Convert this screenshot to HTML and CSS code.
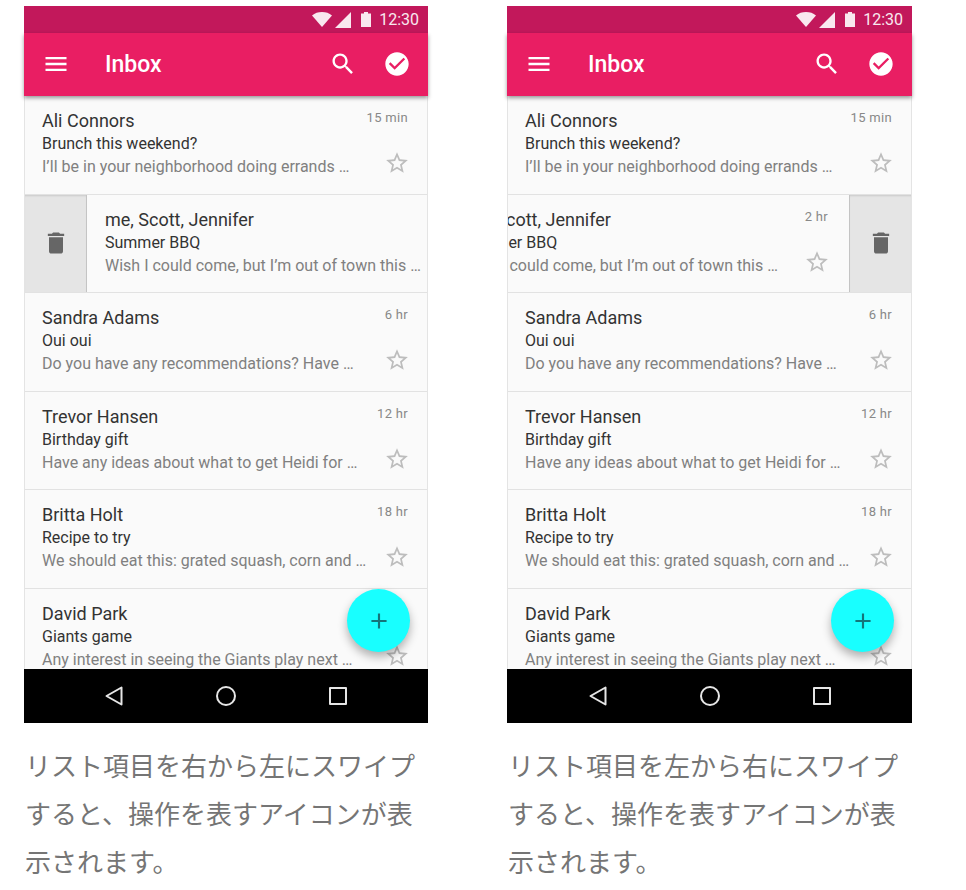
FILE: index.html
```html
<!DOCTYPE html>
<html lang="ja">
<head>
<meta charset="utf-8">
<title>Swipe</title>
<link rel="stylesheet" href="styles.css">
</head>
<body>
<main class="page">
  <figure class="figure figure-a">
    <div class="phone">
      <div class="status">
        <svg class="st-wifi" viewBox="0 0 20 15"><path d="M0 3.4C2.7 1.200 6.200 0 10 0s7.300 1.200 10 3.400L10 15z"/></svg>
        <svg class="st-signal" viewBox="0 0 16 16"><path d="M16 0v16H0z"/></svg>
        <svg class="st-batt" viewBox="0 0 10 15"><path d="M3 0h4v1.500h3V15H0V1.500h3z"/></svg>
        <span class="clock">12:30</span>
      </div>
      <header class="appbar">
        <svg class="icon menu" viewBox="0 0 24 24"><path d="M3 18h18v-2H3v2zm0-5h18v-2H3v2zm0-7v2h18V6H3z"/></svg>
        <span class="title">Inbox</span>
        <svg class="icon search" viewBox="0 0 24 24"><path d="M15.500 14h-.79l-.28-.27C15.410 12.590 16 11.110 16 9.500 16 5.910 13.090 3 9.500 3S3 5.910 3 9.500 5.910 16 9.500 16c1.610 0 3.090-.59 4.230-1.570l.27.28v.79l5 4.990L20.490 19l-4.990-5zm-6 0C7.010 14 5 11.990 5 9.500S7.010 5 9.500 5 14 7.010 14 9.500 11.990 14 9.500 14z"/></svg>
        <svg class="icon check" viewBox="0 0 24 24"><path d="M12 2C6.480 2 2 6.480 2 12s4.480 10 10 10 10-4.480 10-10S17.520 2 12 2zm-2 15l-5-5 1.410-1.410L10 14.170l7.590-7.590L19 8l-9 9z"/></svg>
      </header>
      <div class="list">
        <article class="row">
          <div class="row-main"><div class="name">Ali Connors</div><div class="subject">Brunch this weekend?</div><div class="snippet">I’ll be in your neighborhood doing errands …</div></div>
          <div class="row-side"><span class="time">15 min</span><svg class="star" viewBox="0 0 24 24"><path d="M22 9.240l-7.190-.62L12 2 9.190 8.630 2 9.240l5.460 4.730L5.820 21 12 17.270 18.180 21l-1.630-7.030L22 9.240zM12 15.400l-3.760 2.270 1-4.280-3.320-2.880 4.380-.38L12 6.100l1.710 4.040 4.380.38-3.320 2.880 1 4.280L12 15.400z"/></svg></div>
        </article>
        <article class="row swiped swiped-right">
          <div class="action action-left"><svg class="icon trash" viewBox="0 0 24 24"><path d="M6 19c0 1.100.9 2 2 2h8c1.100 0 2-.9 2-2V7H6v12zM19 4h-3.500l-1-1h-5l-1 1H5v2h14V4z"/></svg></div>
          <div class="row-main"><div class="name">me, Scott, Jennifer</div><div class="subject">Summer BBQ</div><div class="snippet">Wish I could come, but I’m out of town this …</div></div>
        </article>
        <article class="row">
          <div class="row-main"><div class="name">Sandra Adams</div><div class="subject">Oui oui</div><div class="snippet">Do you have any recommendations? Have …</div></div>
          <div class="row-side"><span class="time">6 hr</span><svg class="star" viewBox="0 0 24 24"><path d="M22 9.240l-7.190-.62L12 2 9.190 8.630 2 9.240l5.460 4.730L5.820 21 12 17.270 18.180 21l-1.630-7.030L22 9.240zM12 15.400l-3.760 2.270 1-4.280-3.320-2.880 4.380-.38L12 6.100l1.710 4.040 4.380.38-3.320 2.880 1 4.280L12 15.400z"/></svg></div>
        </article>
        <article class="row">
          <div class="row-main"><div class="name">Trevor Hansen</div><div class="subject">Birthday gift</div><div class="snippet">Have any ideas about what to get Heidi for …</div></div>
          <div class="row-side"><span class="time">12 hr</span><svg class="star" viewBox="0 0 24 24"><path d="M22 9.240l-7.190-.62L12 2 9.190 8.630 2 9.240l5.460 4.730L5.820 21 12 17.270 18.180 21l-1.630-7.030L22 9.240zM12 15.400l-3.760 2.270 1-4.280-3.320-2.880 4.380-.38L12 6.100l1.710 4.040 4.380.38-3.320 2.880 1 4.280L12 15.400z"/></svg></div>
        </article>
        <article class="row">
          <div class="row-main"><div class="name">Britta Holt</div><div class="subject">Recipe to try</div><div class="snippet">We should eat this: grated squash, corn and …</div></div>
          <div class="row-side"><span class="time">18 hr</span><svg class="star" viewBox="0 0 24 24"><path d="M22 9.240l-7.190-.62L12 2 9.190 8.630 2 9.240l5.460 4.730L5.820 21 12 17.270 18.180 21l-1.630-7.030L22 9.240zM12 15.400l-3.760 2.270 1-4.280-3.320-2.880 4.380-.38L12 6.100l1.710 4.040 4.380.38-3.320 2.880 1 4.280L12 15.400z"/></svg></div>
        </article>
        <article class="row">
          <div class="row-main"><div class="name">David Park</div><div class="subject">Giants game</div><div class="snippet">Any interest in seeing the Giants play next …</div></div>
          <div class="row-side"><span class="time"></span><svg class="star" viewBox="0 0 24 24"><path d="M22 9.240l-7.190-.62L12 2 9.190 8.630 2 9.240l5.460 4.730L5.820 21 12 17.270 18.180 21l-1.630-7.030L22 9.240zM12 15.400l-3.760 2.270 1-4.280-3.320-2.880 4.380-.38L12 6.100l1.710 4.040 4.380.38-3.320 2.880 1 4.280L12 15.400z"/></svg></div>
        </article>
        <div class="fab"><svg viewBox="0 0 24 24"><path d="M19 13h-6v6h-2v-6H5v-2h6V5h2v6h6v2z"/></svg></div>
      </div>
      <nav class="navbar">
        <svg class="nav-icon" viewBox="0 0 20 20"><path d="M17.500 1.500v17L2.500 10z"/></svg>
        <svg class="nav-icon" viewBox="0 0 20 20"><circle cx="10" cy="10" r="9"/></svg>
        <svg class="nav-icon" viewBox="0 0 20 20"><rect x="2" y="2" width="16" height="16"/></svg>
      </nav>
    </div>
    <figcaption class="caption">リスト項目を右から左にスワイプすると、操作を表すアイコンが表示されます。</figcaption>
  </figure>

  <figure class="figure figure-b">
    <div class="phone">
      <div class="status">
        <svg class="st-wifi" viewBox="0 0 20 15"><path d="M0 3.4C2.700 1.200 6.200 0 10 0s7.300 1.200 10 3.400L10 15z"/></svg>
        <svg class="st-signal" viewBox="0 0 16 16"><path d="M16 0v16H0z"/></svg>
        <svg class="st-batt" viewBox="0 0 10 15"><path d="M3 0h4v1.500h3V15H0V1.500h3z"/></svg>
        <span class="clock">12:30</span>
      </div>
      <header class="appbar">
        <svg class="icon menu" viewBox="0 0 24 24"><path d="M3 18h18v-2H3v2zm0-5h18v-2H3v2zm0-7v2h18V6H3z"/></svg>
        <span class="title">Inbox</span>
        <svg class="icon search" viewBox="0 0 24 24"><path d="M15.500 14h-.79l-.28-.27C15.410 12.590 16 11.110 16 9.500 16 5.910 13.090 3 9.500 3S3 5.910 3 9.500 5.910 16 9.500 16c1.610 0 3.090-.59 4.230-1.570l.27.28v.79l5 4.990L20.490 19l-4.990-5zm-6 0C7.010 14 5 11.990 5 9.500S7.010 5 9.500 5 14 7.010 14 9.500 11.990 14 9.500 14z"/></svg>
        <svg class="icon check" viewBox="0 0 24 24"><path d="M12 2C6.480 2 2 6.480 2 12s4.480 10 10 10 10-4.480 10-10S17.520 2 12 2zm-2 15l-5-5 1.410-1.410L10 14.170l7.590-7.590L19 8l-9 9z"/></svg>
      </header>
      <div class="list">
        <article class="row">
          <div class="row-main"><div class="name">Ali Connors</div><div class="subject">Brunch this weekend?</div><div class="snippet">I’ll be in your neighborhood doing errands …</div></div>
          <div class="row-side"><span class="time">15 min</span><svg class="star" viewBox="0 0 24 24"><path d="M22 9.240l-7.190-.62L12 2 9.190 8.630 2 9.240l5.460 4.730L5.820 21 12 17.270 18.180 21l-1.630-7.030L22 9.240zM12 15.400l-3.760 2.270 1-4.280-3.320-2.880 4.380-.38L12 6.100l1.710 4.040 4.380.38-3.320 2.880 1 4.280L12 15.400z"/></svg></div>
        </article>
        <article class="row swiped swiped-left">
          <div class="row-main"><div class="name">me, Scott, Jennifer</div><div class="subject">Summer BBQ</div><div class="snippet">Wish I could come, but I’m out of town this …</div></div>
          <div class="row-side"><span class="time">2 hr</span><svg class="star" viewBox="0 0 24 24"><path d="M22 9.240l-7.190-.62L12 2 9.190 8.630 2 9.240l5.460 4.730L5.820 21 12 17.270 18.180 21l-1.630-7.030L22 9.240zM12 15.400l-3.760 2.270 1-4.280-3.320-2.880 4.380-.38L12 6.100l1.710 4.040 4.380.38-3.320 2.880 1 4.280L12 15.400z"/></svg></div>
          <div class="action action-right"><svg class="icon trash" viewBox="0 0 24 24"><path d="M6 19c0 1.100.9 2 2 2h8c1.100 0 2-.9 2-2V7H6v12zM19 4h-3.500l-1-1h-5l-1 1H5v2h14V4z"/></svg></div>
        </article>
        <article class="row">
          <div class="row-main"><div class="name">Sandra Adams</div><div class="subject">Oui oui</div><div class="snippet">Do you have any recommendations? Have …</div></div>
          <div class="row-side"><span class="time">6 hr</span><svg class="star" viewBox="0 0 24 24"><path d="M22 9.240l-7.190-.62L12 2 9.190 8.630 2 9.240l5.460 4.730L5.820 21 12 17.270 18.180 21l-1.630-7.030L22 9.240zM12 15.400l-3.760 2.270 1-4.280-3.320-2.880 4.380-.38L12 6.100l1.710 4.040 4.380.38-3.320 2.880 1 4.280L12 15.400z"/></svg></div>
        </article>
        <article class="row">
          <div class="row-main"><div class="name">Trevor Hansen</div><div class="subject">Birthday gift</div><div class="snippet">Have any ideas about what to get Heidi for …</div></div>
          <div class="row-side"><span class="time">12 hr</span><svg class="star" viewBox="0 0 24 24"><path d="M22 9.240l-7.190-.62L12 2 9.190 8.630 2 9.240l5.460 4.730L5.820 21 12 17.270 18.180 21l-1.630-7.030L22 9.240zM12 15.400l-3.760 2.270 1-4.280-3.320-2.880 4.380-.38L12 6.100l1.710 4.040 4.380.38-3.320 2.880 1 4.280L12 15.400z"/></svg></div>
        </article>
        <article class="row">
          <div class="row-main"><div class="name">Britta Holt</div><div class="subject">Recipe to try</div><div class="snippet">We should eat this: grated squash, corn and …</div></div>
          <div class="row-side"><span class="time">18 hr</span><svg class="star" viewBox="0 0 24 24"><path d="M22 9.240l-7.190-.62L12 2 9.190 8.630 2 9.240l5.460 4.730L5.820 21 12 17.270 18.180 21l-1.630-7.030L22 9.240zM12 15.400l-3.760 2.270 1-4.280-3.320-2.880 4.380-.38L12 6.100l1.710 4.040 4.380.38-3.320 2.880 1 4.280L12 15.400z"/></svg></div>
        </article>
        <article class="row">
          <div class="row-main"><div class="name">David Park</div><div class="subject">Giants game</div><div class="snippet">Any interest in seeing the Giants play next …</div></div>
          <div class="row-side"><span class="time"></span><svg class="star" viewBox="0 0 24 24"><path d="M22 9.240l-7.190-.62L12 2 9.190 8.630 2 9.240l5.460 4.730L5.820 21 12 17.270 18.180 21l-1.630-7.030L22 9.240zM12 15.400l-3.760 2.270 1-4.280-3.320-2.880 4.380-.38L12 6.100l1.710 4.040 4.380.38-3.320 2.880 1 4.280L12 15.400z"/></svg></div>
        </article>
        <div class="fab"><svg viewBox="0 0 24 24"><path d="M19 13h-6v6h-2v-6H5v-2h6V5h2v6h6v2z"/></svg></div>
      </div>
      <nav class="navbar">
        <svg class="nav-icon" viewBox="0 0 20 20"><path d="M17.500 1.500v17L2.500 10z"/></svg>
        <svg class="nav-icon" viewBox="0 0 20 20"><circle cx="10" cy="10" r="9"/></svg>
        <svg class="nav-icon" viewBox="0 0 20 20"><rect x="2" y="2" width="16" height="16"/></svg>
      </nav>
    </div>
    <figcaption class="caption">リスト項目を左から右にスワイプすると、操作を表すアイコンが表示されます。</figcaption>
  </figure>
</main>
</body>
</html>
```

FILE: styles.css
```css
* { box-sizing: border-box; }
html, body { margin: 0; background: #fff; }
body { font-family: Roboto, "Noto Sans CJK JP", sans-serif; overflow: hidden; }

.page {
  display: grid;
  grid-template-columns: 404px 405px;
  column-gap: 79px;
  padding: 6px 0 0 24px;
}
.figure { margin: 0; }

.phone { display: flex; flex-direction: column; height: 717px; }

.status {
  height: 27px;
  background: #c2185b;
  display: flex;
  align-items: center;
  justify-content: flex-end;
  padding-right: 9px;
  flex: none;
}
.status svg { fill: #f9e8ef; display: block; }
.st-wifi { width: 20px; height: 15px; margin-right: 3px; }
.st-signal { width: 16px; height: 16px; margin-right: 10px; }
.st-batt { width: 10px; height: 15px; margin-right: 8px; }
.clock { color: #f9e8ef; font-size: 16px; }

.appbar {
  height: 63px;
  flex: none;
  background: #e91e63;
  display: flex;
  align-items: center;
  padding: 0 17px 0 18px;
  color: #fff;
  position: relative;
  z-index: 2;
  box-shadow: 0 2px 4px rgba(0, 0, 0, .4);
}
.icon { width: 28px; height: 28px; display: block; flex: none; }
.appbar .icon { fill: #fff; margin-bottom: 2px; }
.title { font-size: 23px; font-weight: 500; margin-left: 35px; flex: 1; }
.search { margin-right: 26px; }

.list {
  flex: 1;
  min-height: 0;
  position: relative;
  overflow: hidden;
  background: #fafafa;
  border-left: 1px solid #e4e4e4;
  border-right: 1px solid #e4e4e4;
}

.row {
  height: 98.5px;
  border-bottom: 1px solid #e2e2e2;
  display: flex;
  padding: 14px 8px 0 17px;
  flex: none;
  overflow: hidden;
}
.row-main { flex: 1; min-width: 0; white-space: nowrap; }
.row-side {
  flex: none;
  width: 60px;
  display: flex;
  flex-direction: column;
  align-items: flex-end;
  padding-right: 11px;
}
.name { font-size: 18px; line-height: 22px; color: #333; }
.subject { font-size: 16px; line-height: 23px; color: #333; }
.snippet { font-size: 16px; line-height: 23px; color: #808080; }
.time { font-size: 13px; line-height: 16px; color: #888; height: 16px; letter-spacing: .3px; }
.star { width: 26px; height: 26px; fill: #bdbdbd; margin-top: 24px; margin-right: -2px; display: block; }

.swiped { padding: 0; align-items: stretch; }
.swiped .row-main { padding-top: 14px; }
.swiped .row-side { padding-top: 14px; }
.swiped-right .row-main { padding-left: 18px; }
.swiped-left .row-main { margin-left: -46px; padding-left: 0; }
.swiped-left .row-side { padding-right: 21px; }
.action {
  flex: none;
  width: 62px;
  background: #e5e5e5;
  display: flex;
  align-items: center;
  justify-content: center;
  box-shadow: inset 0 2px 2px -1px rgba(0, 0, 0, .12);
}
.action-left { border-right: 1px solid #c4c4c4; }
.action-right { border-left: 1px solid #c4c4c4; }
.trash { fill: #666; }

.fab {
  position: absolute;
  right: 17px;
  top: 493px;
  width: 63px;
  height: 63px;
  border-radius: 50%;
  background: #18ffff;
  box-shadow: 0 5px 10px rgba(0, 0, 0, .3);
  display: flex;
  align-items: center;
  justify-content: center;
}
.fab svg { width: 26px; height: 26px; fill: #14757a; display: block; }

.navbar {
  height: 54px;
  flex: none;
  background: #000;
  display: flex;
  align-items: center;
  justify-content: center;
  gap: 92px;
}
.nav-icon { width: 20px; height: 20px; fill: none; stroke: #e6e6e6; stroke-width: 2; stroke-linejoin: round; display: block; }

.caption {
  margin-top: 18px;
  padding-left: 1px;
  font-family: "Noto Sans CJK JP", sans-serif;
  font-size: 26px;
  font-weight: 400;
  line-height: 48px;
  color: #757575;
}
```
